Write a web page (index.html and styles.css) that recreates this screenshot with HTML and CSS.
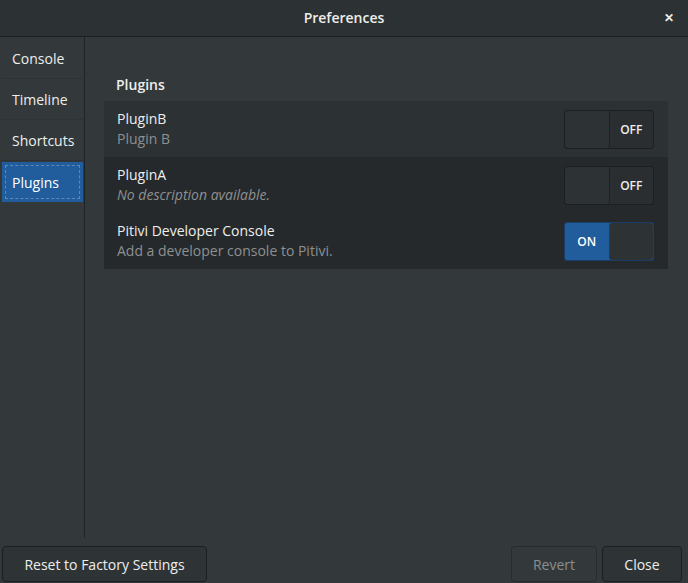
FILE: index.html
```html
<!DOCTYPE html>
<html>
<head>
<meta charset="utf-8">
<link rel="stylesheet" href="styles.css">
</head>
<body>
<div class="window">
  <header class="titlebar">
    <span class="title">Preferences</span>
    <span class="close">✕</span>
  </header>
  <div class="main">
    <nav class="sidebar">
      <div class="side-row">Console</div>
      <div class="side-row">Timeline</div>
      <div class="side-row">Shortcuts</div>
      <div class="side-row selected"><span class="focus">Plugins</span></div>
    </nav>
    <section class="content">
      <h2 class="heading">Plugins</h2>
      <div class="list">
        <div class="row hover">
          <div class="texts">
            <div class="name">PluginB</div>
            <div class="desc">Plugin B</div>
          </div>
          <div class="switch off"><span class="knob"></span><span class="label">OFF</span></div>
        </div>
        <div class="row">
          <div class="texts">
            <div class="name">PluginA</div>
            <div class="desc italic">No description available.</div>
          </div>
          <div class="switch off"><span class="knob"></span><span class="label">OFF</span></div>
        </div>
        <div class="row">
          <div class="texts">
            <div class="name">Pitivi Developer Console</div>
            <div class="desc">Add a developer console to Pitivi.</div>
          </div>
          <div class="switch on"><span class="label">ON</span><span class="knob"></span></div>
        </div>
      </div>
    </section>
  </div>
  <footer class="footer">
    <button class="btn reset">Reset to Factory Settings</button>
    <div class="spacer"></div>
    <button class="btn revert" disabled>Revert</button>
    <button class="btn close-btn">Close</button>
  </footer>
</div>
</body>
</html>
```
FILE: styles.css
```css
* { box-sizing: border-box; }
html, body { margin: 0; padding: 0; }
body {
  width: 688px;
  height: 583px;
  overflow: hidden;
  background: #33393b;
  font-family: "Open Sans", "Noto Sans", sans-serif;
  font-size: 14px;
  color: #eeeeec;
}
.window { display: flex; flex-direction: column; height: 583px; }
.titlebar {
  height: 37px;
  flex: none;
  background: #2c3133;
  border-bottom: 1px solid #1b1f20;
  display: flex;
  align-items: center;
  justify-content: center;
  position: relative;
  padding-bottom: 2px;
}
.title { font-weight: 600; font-size: 14px; color: #eeeeec; }
.close {
  position: absolute;
  right: 14px;
  top: 9px;
  font-size: 12px;
  font-weight: bold;
  color: #eeeeec;
}
.main { display: flex; flex: 1; min-height: 0; }
.sidebar {
  width: 85px;
  flex: none;
  border-right: 1px solid #1f2325;
  padding: 0 1px 0 2px;
}
.side-row {
  height: 41px;
  display: flex;
  align-items: center;
  padding-left: 10px;
  border-bottom: 1px solid #2d3234;
}
.side-row:first-child { height: 42px; padding-top: 2px; }
.side-row.selected {
  background: #215d9c;
  border-bottom: none;
  height: 40px;
  padding: 3px;
  margin-top: 1px;
}
.focus {
  flex: 1;
  height: 100%;
  border: 1px dashed rgba(238,238,236,0.3);
  display: flex;
  align-items: center;
  padding-left: 6px;
  color: #ffffff;
}
.content { flex: 1; padding: 38px 20px 0 19px; }
.heading {
  margin: 0 0 8px 12px;
  font-size: 14px;
  font-weight: 600;
  height: 18px;
  line-height: 20px;
}
.list { background: #25292b; }
.row {
  height: 56px;
  display: flex;
  align-items: center;
  padding: 0 14px 0 13px;
}
.row.hover { background: #2c3133; }
.texts { flex: 1; }
.name { line-height: 20px; }
.desc { line-height: 20px; color: #8d9091; }
.desc.italic { font-style: italic; }
.switch {
  width: 90px;
  height: 39px;
  border: 1px solid #1c1f20;
  border-radius: 3px;
  display: flex;
  background: #2a2e30;
  overflow: hidden;
}
.switch .knob, .switch .label { flex: 1; }
.switch .label {
  display: flex;
  align-items: center;
  justify-content: center;
  font-size: 12px;
  font-weight: 600;
}
.switch.off .knob {
  background: #2d3234;
  border-right: 1px solid #1c1f20;
  border-radius: 3px;
}
.switch.on {
  background: #215d9c;
  border-color: #1b3e66;
}
.switch.on .label { color: #ffffff; }
.switch.on .knob {
  background: #2d3234;
  border-left: 1px solid #1b3e66;
  border-radius: 3px;
}
.footer {
  height: 45px;
  flex: none;
  display: flex;
  align-items: flex-start;
  padding: 8px 6px 0 2px;
  gap: 5px;
}
.spacer { flex: 1; }
.btn {
  font-family: inherit;
  font-size: 14px;
  height: 36px;
  background: #2e3436;
  color: #eeeeec;
  border: 1px solid #1c1f20;
  border-radius: 4px;
  padding: 0 10px;
}
.reset { width: 205px; }
.revert { width: 86px; color: #8b8e8f; background: #33393b; border-color: #272b2c; }
.close-btn { width: 80px; }
```
